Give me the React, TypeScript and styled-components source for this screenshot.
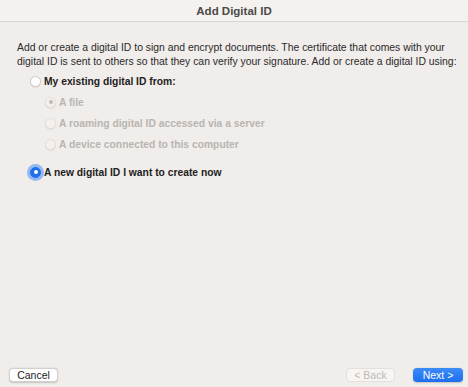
import styled, { createGlobalStyle } from "styled-components";

const GlobalStyle = createGlobalStyle`
  html, body {
    margin: 0;
    padding: 0;
    width: 468px;
    height: 387px;
    overflow: hidden;
    background: #f1edea;
  }
  * { box-sizing: border-box; }
`;

const Window = styled.div`
  width: 468px;
  height: 387px;
  display: flex;
  flex-direction: column;
  background: #f1edea;
  font-family: "Liberation Sans", Arial, sans-serif;
  color: #262626;
`;

const TitleBar = styled.div`
  height: 22px;
  flex-shrink: 0;
  display: flex;
  align-items: center;
  justify-content: center;
  background: #f5f1ee;
  border-bottom: 1px solid #d9d5d2;
  font-size: 11.5px;
  font-weight: bold;
  color: #4a4a4a;
`;

const Body = styled.div`
  flex: 1;
  padding: 19px 17px 0 17px;
  display: flex;
  flex-direction: column;
`;

const Intro = styled.p`
  margin: 0;
  font-size: 10.4px;
  line-height: 14px;
  white-space: nowrap;
  color: #2a2a2a;
`;

const Options = styled.div`
  display: flex;
  flex-direction: column;
  padding-left: 13px;
  margin-top: 5px;
`;

const SubOptions = styled.div`
  display: flex;
  flex-direction: column;
  gap: 7px;
  padding-left: 15px;
  margin-top: 7px;
  margin-bottom: 14px;
`;

const Option = styled.label<{ $disabled?: boolean }>`
  display: flex;
  align-items: center;
  gap: 3px;
  height: 14px;
  font-size: 10.3px;
  font-weight: bold;
  color: ${(p) => (p.$disabled ? "#b8b5b2" : "#222")};
`;

const Radio = styled.span<{ $checked?: boolean; $disabled?: boolean; $focus?: boolean }>`
  width: 11px;
  height: 11px;
  border-radius: 50%;
  flex-shrink: 0;
  display: flex;
  align-items: center;
  justify-content: center;
  background: ${(p) => (p.$checked && !p.$disabled ? "#1f6fe8" : p.$disabled ? "#f3f0ed" : "#ffffff")};
  border: 1px solid ${(p) => (p.$checked && !p.$disabled ? "#1f6fe8" : p.$disabled ? "#e3e0dd" : "#cfcbc8")};
  box-shadow: ${(p) => (p.$focus ? "0 0 0 3px rgba(70, 140, 250, 0.55)" : "0 0.5px 1px rgba(0,0,0,0.12)")};

  &::after {
    content: "";
    display: ${(p) => (p.$checked ? "block" : "none")};
    width: 4px;
    height: 4px;
    border-radius: 50%;
    background: ${(p) => (p.$disabled ? "#bdbab7" : "#ffffff")};
  }
`;

const Footer = styled.div`
  height: 32px;
  flex-shrink: 0;
  display: flex;
  align-items: flex-end;
  justify-content: space-between;
  padding: 0 5px 5px 9px;
`;

const NavGroup = styled.div`
  display: flex;
  gap: 18px;
`;

const Button = styled.button<{ $primary?: boolean }>`
  width: ${(p) => (p.$primary ? "50px" : "49px")};
  height: 14px;
  padding: 0;
  border-radius: 4px;
  font-family: "Liberation Sans", Arial, sans-serif;
  font-size: 10.5px;
  line-height: 12px;
  border: ${(p) => (p.$primary ? "none" : "0.5px solid #d4d0cd")};
  background: ${(p) => (p.$primary ? "linear-gradient(#3b8bf7, #1e6fee)" : "#ffffff")};
  color: ${(p) => (p.$primary ? "#ffffff" : "#222")};
  box-shadow: 0 0.5px 1.5px rgba(0, 0, 0, 0.18);

  &:disabled {
    background: #f7f4f1;
    color: #bdbab7;
    border: 0.5px solid #e3e0dd;
    box-shadow: none;
  }
`;

export default function App() {
  return (
    <Window>
      <GlobalStyle />
      <TitleBar>Add Digital ID</TitleBar>
      <Body>
        <Intro>
          Add or create a digital ID to sign and encrypt documents. The certificate that comes with your
          <br />
          digital ID is sent to others so that they can verify your signature. Add or create a digital ID using:
        </Intro>
        <Options>
          <Option>
            <Radio />
            My existing digital ID from:
          </Option>
          <SubOptions>
            <Option $disabled>
              <Radio $checked $disabled />
              A file
            </Option>
            <Option $disabled>
              <Radio $disabled />
              A roaming digital ID accessed via a server
            </Option>
            <Option $disabled>
              <Radio $disabled />
              A device connected to this computer
            </Option>
          </SubOptions>
          <Option>
            <Radio $checked $focus />
            A new digital ID I want to create now
          </Option>
        </Options>
      </Body>
      <Footer>
        <Button>Cancel</Button>
        <NavGroup>
          <Button disabled>&lt; Back</Button>
          <Button $primary>Next &gt;</Button>
        </NavGroup>
      </Footer>
    </Window>
  );
}
